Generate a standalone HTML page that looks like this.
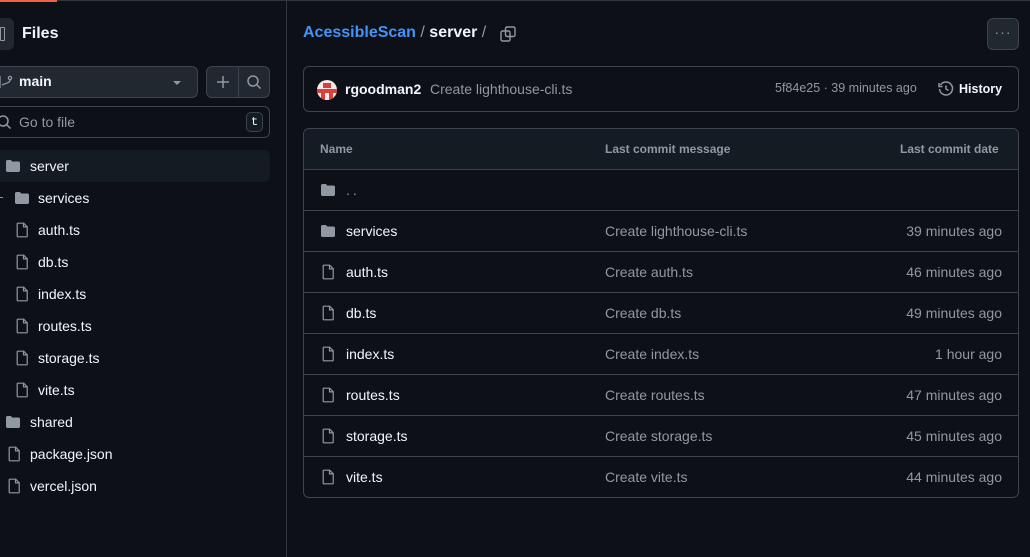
<!DOCTYPE html><html><head><style>
*{box-sizing:border-box;margin:0;padding:0}
body{width:1030px;height:557px;background:#0d1117;font-family:"Liberation Sans",sans-serif;color:#f0f6fc;position:relative;overflow:hidden;font-size:14px}
.a{position:absolute}
.muted{color:#9198a1}
.row{position:absolute;left:303px;width:716px;height:41px;border-top:1px solid #30363d}
.row span{position:absolute;top:13px}
svg{display:block}
</style></head><body>
<div class="a" style="left:0;top:0;width:1030px;height:1px;background:#30363d"></div>
<div class="a" style="left:0;top:0;width:57px;height:2px;background:#f0633e"></div>
<div class="a" style="left:286px;top:1px;width:1px;height:556px;background:#30363d"></div>
<!-- sidebar -->
<div class="a" style="left:-18px;top:18px;width:32px;height:32px;border-radius:6px;background:#212830"></div>
<div class="a" style="left:0;top:27px;width:5px;height:14px;border:1.5px solid #9198a1;border-radius:1px"></div>
<div class="a" style="left:22px;top:25px;font-size:16px;font-weight:bold">Files</div>
<div class="a" style="left:-10px;top:66px;width:208px;height:32px;border:1px solid #3d444d;border-radius:6px;background:#212830"></div>
<svg class="a" style="left:0;top:74px" width="14" height="16" viewBox="0 0 14 16"><circle cx="10" cy="4" r="1.6" fill="none" stroke="#9198a1" stroke-width="1.3"/><path d="M0 2v12M10 6c0 3-4 3-8 5" fill="none" stroke="#9198a1" stroke-width="1.3"/></svg>
<div class="a" style="left:19px;top:73px;font-size:14px;font-weight:bold">main</div>
<div class="a" style="left:173px;top:81px;border-left:4px solid transparent;border-right:4px solid transparent;border-top:4px solid #9198a1"></div>
<div class="a" style="left:206px;top:66px;width:64px;height:32px;border:1px solid #3d444d;border-radius:6px;background:#212830"></div>
<div class="a" style="left:238px;top:67px;width:1px;height:30px;background:#3d444d"></div>
<svg class="a" style="left:215px;top:74px" width="16" height="16"><path d="M8 2v12M2 8h12" stroke="#9198a1" stroke-width="1.5"/></svg>
<svg class="a" style="left:246px;top:74px" width="16" height="16"><circle cx="7" cy="7" r="5" fill="none" stroke="#9198a1" stroke-width="1.5"/><path d="M11 11l3.5 3.5" stroke="#9198a1" stroke-width="1.5"/></svg>
<div class="a" style="left:-10px;top:106px;width:280px;height:32px;border:1px solid #3d444d;border-radius:6px"></div>
<svg class="a" style="left:-4px;top:114px" width="16" height="16"><circle cx="7" cy="7" r="5" fill="none" stroke="#9198a1" stroke-width="1.5"/><path d="M11 11l3.5 3.5" stroke="#9198a1" stroke-width="1.5"/></svg>
<div class="a muted" style="left:19px;top:114px">Go to file</div>
<div class="a" style="left:246px;top:112px;width:17px;height:20px;border:1px solid #3d444d;border-radius:5px;background:#151b23;font-family:'Liberation Mono',monospace;font-size:12px;text-align:center;line-height:18px">t</div>
<div class="a" style="left:-10px;top:150px;width:280px;height:32px;border-radius:6px;background:#151b23"></div>
<div id="side"></div>
<!-- main -->
<div class="a" style="left:303px;top:24px;font-size:16px;font-weight:bold"><span style="color:#4493f8">AcessibleScan</span> <span class="muted" style="font-weight:normal">/</span> server <span class="muted" style="font-weight:normal">/</span></div>
<svg class="a" style="left:500px;top:26px" width="16" height="16"><rect x="1" y="5" width="9" height="10" rx="1.5" fill="none" stroke="#9198a1" stroke-width="1.4"/><rect x="5.5" y="1" width="9.5" height="9.5" rx="1.5" fill="none" stroke="#9198a1" stroke-width="1.4"/></svg>
<div class="a" style="left:987px;top:18px;width:32px;height:32px;border:1px solid #3d444d;border-radius:6px;background:#212830;color:#9198a1;text-align:center;font-size:14px;line-height:26px;letter-spacing:1px">···</div>
<div class="a" style="left:303px;top:66px;width:716px;height:46px;border:1px solid #3d444d;border-radius:6px"></div>
<div class="a" style="left:317px;top:80px;width:20px;height:20px;border-radius:50%;background:#f5e9e9;overflow:hidden"><div style="position:absolute;left:6px;top:3px;width:8px;height:5px;background:#d9413a"></div><div style="position:absolute;left:0;top:9px;width:20px;height:4px;background:#d9413a"></div><div style="position:absolute;left:4px;top:13px;width:4px;height:7px;background:#d9413a"></div><div style="position:absolute;left:12px;top:13px;width:4px;height:7px;background:#d9413a"></div></div>
<div class="a" style="left:345px;top:81px;font-weight:bold">rgoodman2</div>
<div class="a muted" style="left:430px;top:81px">Create lighthouse-cli.ts</div>
<div class="a muted" style="left:775px;top:81px;font-size:12.5px">5f84e25 · 39 minutes ago</div>
<svg class="a" style="left:938px;top:81px" width="16" height="16"><path d="M2.5 4A6.5 6.5 0 1 1 1.5 8" fill="none" stroke="#9198a1" stroke-width="1.5"/><path d="M1 2v3.5h3.5" fill="none" stroke="#9198a1" stroke-width="1.5"/><path d="M8 4.5V8l2.5 1.5" fill="none" stroke="#9198a1" stroke-width="1.5"/></svg>
<div class="a" style="left:959px;top:82px;font-size:12.5px;font-weight:bold">History</div>
<div class="a" style="left:303px;top:128px;width:716px;height:370px;border:1px solid #3d444d;border-radius:6px;overflow:hidden">
<div style="height:41px;background:#151b23"></div></div>
<div class="a muted" style="left:320px;top:142px;font-size:12px;font-weight:bold">Name</div>
<div class="a muted" style="left:605px;top:142px;font-size:12px;font-weight:bold">Last commit message</div>
<div class="a muted" style="left:900px;top:142px;font-size:12px;font-weight:bold">Last commit date</div>
<div id="rows"></div>
<script>
const fold=(x,y)=>`<svg class="a" style="left:${x}px;top:${y}px" width="16" height="16"><path d="M1 3.5C1 2.7 1.7 2 2.5 2h3.3l1.5 1.5h6.2c.8 0 1.5.7 1.5 1.5v7.5c0 .8-.7 1.5-1.5 1.5h-11C1.7 14 1 13.3 1 12.5z" fill="#9198a1"/></svg>`;
const file=(x,y)=>`<svg class="a" style="left:${x}px;top:${y}px" width="16" height="16"><path d="M3.7 1.2h6l3.5 3.5v9.6c0 .3-.2.5-.5.5H3.7c-.3 0-.5-.2-.5-.5V1.7c0-.3.2-.5.5-.5zM9.5 1.2v3.7h3.7" fill="none" stroke="#9198a1" stroke-width="1.2"/></svg>`;
let s='';
const side=[['server',0,1],['services',1,1],['auth.ts',1,0],['db.ts',1,0],['index.ts',1,0],['routes.ts',1,0],['storage.ts',1,0],['vite.ts',1,0],['shared',0,1],['package.json',0,0],['vercel.json',0,0]];
side.forEach((it,i)=>{const y=166+i*32;const ix=it[1]?14:6;const tx=it[1]?38:30;
s+=(it[2]?fold(ix-(it[1]?0:1),y-8):file(ix,y-8))+`<div class="a" style="left:${tx}px;top:${y-8}px">${it[0]}</div>`;});
s+=`<div class="a" style="left:0;top:197px;width:3px;height:1px;background:#9198a1"></div>`;
document.getElementById('side').innerHTML=s;
let r='';
const rows=[['..',1,'',''],['services',1,'Create lighthouse-cli.ts','39 minutes ago'],['auth.ts',0,'Create auth.ts','46 minutes ago'],['db.ts',0,'Create db.ts','49 minutes ago'],['index.ts',0,'Create index.ts','1 hour ago'],['routes.ts',0,'Create routes.ts','47 minutes ago'],['storage.ts',0,'Create storage.ts','45 minutes ago'],['vite.ts',0,'Create vite.ts','44 minutes ago']];
rows.forEach((it,i)=>{const t=169+i*41;
r+=`<div class="a" style="left:303px;top:${t}px;width:716px;height:1px;background:#3d444d"></div>`;
r+=(it[1]?fold(320,t+13):file(320,t+13));
r+=`<div class="a" style="left:346px;top:${t+13}px;${i==0?'color:#9198a1;letter-spacing:3px':''}">${it[0]}</div>`;
r+=`<div class="a muted" style="left:605px;top:${t+13}px">${it[2]}</div>`;
r+=`<div class="a muted" style="right:28px;top:${t+13}px">${it[3]}</div>`;});
document.getElementById('rows').innerHTML=r;
</script>
</body></html>
